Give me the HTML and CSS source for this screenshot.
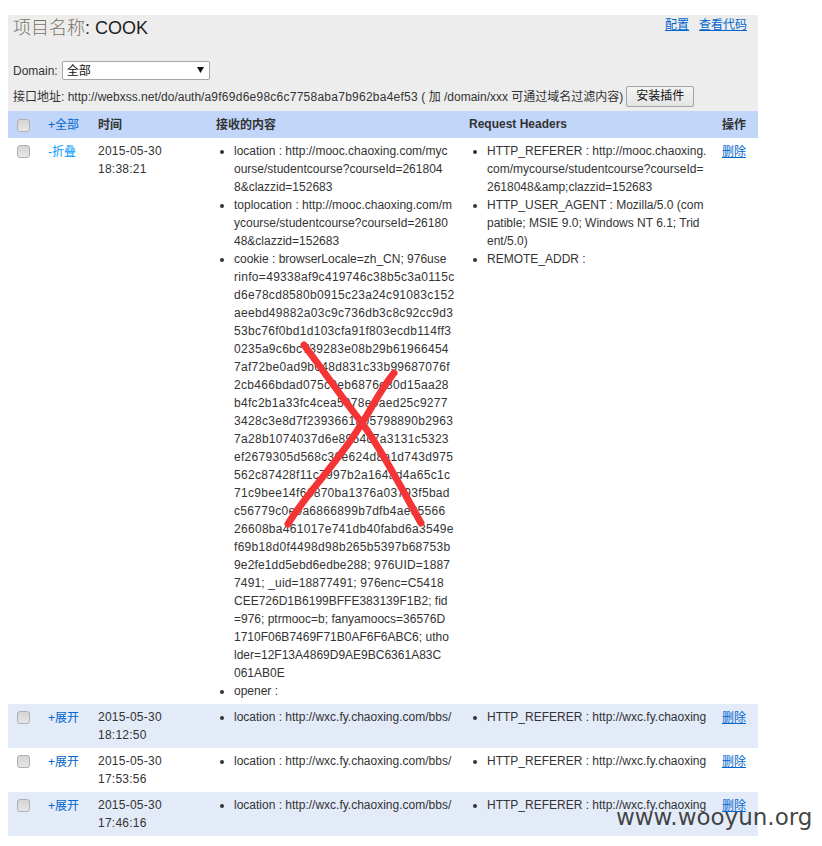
FILE: index.html
```html
<!DOCTYPE html>
<html lang="zh-CN">
<head>
<meta charset="utf-8">
<title>项目名称: COOK</title>
<link rel="stylesheet" href="styles.css">
</head>
<body>
<div class="page">
  <header class="panel">
    <div class="title-row">
      <h1 class="title"><span class="title-cjk">项目名称</span>: COOK</h1>
      <nav class="top-links"><a href="#">配置</a><a href="#">查看代码</a></nav>
    </div>
    <div class="domain-row">
      <label class="domain-label">Domain:</label>
      <span class="select-wrap">
        <select class="domain-select"><option>全部</option></select>
        <svg class="select-arrow" width="7" height="6" viewBox="0 0 7 6"><path d="M0 0H7L3.5 6Z" fill="#111"/></svg>
      </span>
    </div>
    <div class="api-row">
      <span>接口地址: http://webxss.net/do/auth/<span class="hash">a9f69d6e98c6c7758aba7b962ba4ef53</span> ( 加 /domain/xxx 可通过域名过滤内容)</span>
      <button class="install" type="button">安装插件</button>
    </div>
  </header>
  <table class="log">
    <colgroup>
      <col class="c-check"><col class="c-toggle"><col class="c-time"><col class="c-content"><col class="c-headers"><col class="c-action">
    </colgroup>
    <thead>
      <tr>
        <th><input type="checkbox" class="check"></th>
        <th class="normal"><a href="#" class="plain">+全部</a></th>
        <th>时间</th>
        <th>接收的内容</th>
        <th class="latin">Request Headers</th>
        <th>操作</th>
      </tr>
    </thead>
    <tbody>
      <tr>
        <td><input type="checkbox" class="check"></td>
        <td><a href="#" class="plain bright">-折叠</a></td>
        <td class="time">2015-05-30<br>18:38:21</td>
        <td><ul>
          <li>location : http://mooc.chaoxing.com/myc<br>ourse/studentcourse?courseId=261804<br>8&amp;clazzid=152683</li>
          <li>toplocation : http://mooc.chaoxing.com/m<br>ycourse/studentcourse?courseId=26180<br>48&amp;clazzid=152683</li>
          <li>cookie : browserLocale=zh_CN; 976use<br><span class="hex">rinfo=49338af9c419746c38b5c3a0115c<br>d6e78cd8580b0915c23a24c91083c152<br>aeebd49882a03c9c736db3c8c92cc9d3<br>53bc76f0bd1d103cfa91f803ecdb114ff3<br>0235a9c6bc739283e08b29b61966454<br>7af72be0ad9b648d831c33b99687076f<br>2cb466bdad075c0eb6876e80d15aa28<br>b4fc2b1a33fc4cea5078e0aed25c9277<br>3428c3e8d7f2393661a05798890b2963<br>7a28b1074037d6e8954c7a3131c5323<br>ef2679305d568c30e624d8a1d743d975<br>562c87428f11c7997b2a164ad4a65c1c<br>71c9bee14f66870ba1376a03793f5bad<br>c56779c0e9a6866899b7dfb4ae35566<br>26608ba461017e741db40fabd6a3549e<br>f69b18d0f4498d98b265b5397b68753b</span><br><span class="mixed">9e2fe1dd5ebd6edbe288; 976UID=1887<br>7491; _uid=18877491; 976enc=C5418</span><br>CEE726D1B6199BFFE383139F1B2; fid<br>=976; ptrmooc=b; fanyamoocs=36576D<br>1710F06B7469F71B0AF6F6ABC6; utho<br>lder=12F13A4869D9AE9BC6361A83C<br>061AB0E</li>
          <li>opener :</li>
        </ul></td>
        <td><ul>
          <li>HTTP_REFERER : http://mooc.chaoxing.<br>com/mycourse/studentcourse?courseId=<br>2618048&amp;amp;clazzid=152683</li>
          <li>HTTP_USER_AGENT : Mozilla/5.0 (com<br>patible; MSIE 9.0; Windows NT 6.1; Trid<br>ent/5.0)</li>
          <li>REMOTE_ADDR :</li>
        </ul></td>
        <td><a href="#">删除</a></td>
      </tr>
      <tr class="alt">
        <td><input type="checkbox" class="check"></td>
        <td><a href="#" class="plain">+展开</a></td>
        <td class="time">2015-05-30<br>18:12:50</td>
        <td><ul><li>location : http://wxc.fy.chaoxing.com/bbs/</li></ul></td>
        <td><ul><li>HTTP_REFERER : http://wxc.fy.chaoxing</li></ul></td>
        <td><a href="#">删除</a></td>
      </tr>
      <tr>
        <td><input type="checkbox" class="check"></td>
        <td><a href="#" class="plain">+展开</a></td>
        <td class="time">2015-05-30<br>17:53:56</td>
        <td><ul><li>location : http://wxc.fy.chaoxing.com/bbs/</li></ul></td>
        <td><ul><li>HTTP_REFERER : http://wxc.fy.chaoxing</li></ul></td>
        <td><a href="#">删除</a></td>
      </tr>
      <tr class="alt">
        <td><input type="checkbox" class="check"></td>
        <td><a href="#" class="plain">+展开</a></td>
        <td class="time">2015-05-30<br>17:46:16</td>
        <td><ul><li>location : http://wxc.fy.chaoxing.com/bbs/</li></ul></td>
        <td><ul><li>HTTP_REFERER : http://wxc.fy.chaoxing</li></ul></td>
        <td><a href="#">删除</a></td>
      </tr>
    </tbody>
  </table>
</div>
<svg class="cross" width="822" height="846" viewBox="0 0 822 846">
  <path d="M304 345C320 366 340 395 362 423C385 455 405 495 421 523" />
  <path d="M394 373C380 390 372 408 362 423C340 460 305 495 288 524" />
</svg>
<div class="watermark">www.wooyun.org</div>
</body>
</html>
```

FILE: styles.css
```css
* { box-sizing: border-box; }
html, body { margin: 0; padding: 0; }
body {
  position: relative;
  height: 846px;
  overflow: hidden;
  background: #fff;
  color: #333;
  font: 12px/18px "Liberation Sans", "Noto Sans CJK SC", Arial, sans-serif;
}
a { color: #0066cc; }
.page { width: 750px; margin-left: 8px; padding-top: 15px; }

.panel { height: 96px; background: #ededed; padding: 0 11px 0 5px; }
.title-row { display: flex; justify-content: space-between; align-items: flex-start; height: 46px; }
.title { margin: 3px 0 0; font-size: 18px; line-height: 21px; font-weight: 400; color: #222; }
.title-cjk { color: #7a7466; font-weight: 300; }
.top-links { display: flex; gap: 10px; padding-top: 1px; }

.domain-row { display: flex; align-items: center; height: 19px; }
.domain-label { margin-right: 4px; }
.select-wrap { position: relative; display: block; width: 148px; height: 19px; }
.domain-select {
  appearance: none;
  width: 148px;
  height: 19px;
  padding: 1px 0 0 4px;
  border: 1px solid #a6a6a6;
  border-radius: 2px;
  background: #fff;
  color: #111;
  font: 12px/17px "Liberation Sans", "Noto Sans CJK SC", sans-serif;
}
.select-arrow { position: absolute; left: 135px; top: 6px; pointer-events: none; }

.api-row { display: flex; align-items: center; gap: 3px; height: 21px; margin-top: 6px; white-space: nowrap; }
.hash { letter-spacing: 0.25px; }
.hex { letter-spacing: 0.3px; }
.mixed { letter-spacing: 0.15px; }
.install {
  width: 68px;
  height: 21px;
  padding: 0;
  border: 1px solid #a3a3a3;
  border-radius: 2px;
  background: linear-gradient(#f4f4f4, #e4e4e4);
  color: #111;
  font: 12px/19px "Liberation Sans", "Noto Sans CJK SC", sans-serif;
}

.log { width: 750px; table-layout: fixed; border-collapse: collapse; border-spacing: 0; }
.c-check { width: 32px; }
.c-toggle { width: 50px; }
.c-time { width: 118px; }
.c-content { width: 253px; }
.c-headers { width: 253px; }
.c-action { width: 44px; }
.log th { height: 27px; padding: 5px 8px 4px; background: #c2d6fa; text-align: left; font-weight: 700; }
.log th.normal { font-weight: 400; }
.log th.latin { padding: 4px 8px 5px; }
.log td { padding: 4px 8px; vertical-align: top; }
.log td a { display: inline-block; padding-top: 1px; }
.log td.time { letter-spacing: 0.25px; }
.log tr.alt td { background: #e3eaf8; }
.log ul { margin: 0; padding: 0 0 0 18px; white-space: nowrap; }
.plain { color: #0066cc; text-decoration: none; }
.plain.bright { color: #0099ff; }

.check {
  appearance: none;
  display: block;
  width: 13px;
  height: 13px;
  margin: 3px 0 0 1px;
  border: 1px solid #b0b0b0;
  border-radius: 3px;
  background: linear-gradient(#d4d4d4, #e6e6e6);
}
thead .check { margin-top: 0; }

.cross { position: absolute; left: 0; top: 0; pointer-events: none; }
.cross path { fill: none; stroke: #f53535; stroke-width: 7; stroke-linecap: round; }
.watermark {
  position: absolute;
  left: 616px;
  top: 803px;
  color: rgba(50, 50, 50, 0.92);
  font: 23px/28px "DejaVu Sans", sans-serif;
  white-space: nowrap;
}
```
